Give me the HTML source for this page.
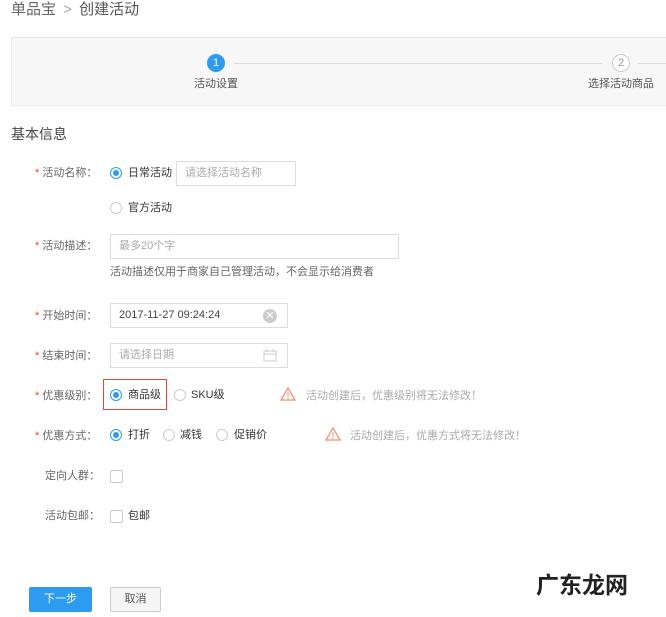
<!DOCTYPE html>
<html><head><meta charset="utf-8"><style>
body{margin:0;width:666px;height:617px;background:#fff;font-family:"Liberation Sans","Noto Sans CJK SC",sans-serif;color:#333;position:relative;overflow:hidden}
.a{position:absolute;white-space:nowrap}
.lbl{font-size:11px;color:#666;line-height:14px}
.star{color:#f04134;font-size:11px}
.r{position:absolute;width:12px;height:12px;border:1px solid #ccc;border-radius:50%;background:#fff;box-sizing:border-box}
.r.on{border-color:#2d9bf0}
.r.on:after{content:"";position:absolute;left:2px;top:2px;width:6px;height:6px;border-radius:50%;background:#2d9bf0}
.t{font-size:11px;color:#555;line-height:14px}
.in{position:absolute;border:1px solid #ddd;box-sizing:border-box;font-size:11px;color:#aaa;padding-left:8px;background:#fff}
.cb{position:absolute;width:13px;height:13px;border:1px solid #ccc;border-radius:2px;box-sizing:border-box}
.warn{color:#aaa;font-size:11px}
</style></head><body>
<div class="a" style="left:11px;top:0;font-size:15px;color:#666;line-height:20px">单品宝 <span style="color:#aaa;margin:0 3px">&gt;</span> <span style="color:#555">创建活动</span></div>
<div class="a" style="left:11px;top:37px;width:670px;height:69px;background:#f7f7f7;border:1px solid #e8e8e8;box-sizing:border-box"></div>
<div class="a" style="left:207px;top:54px;width:18px;height:18px;border-radius:50%;background:#2d9bf0;color:#fff;font-size:11px;text-align:center;line-height:18px">1</div>
<div class="a" style="left:234px;top:63px;width:368px;height:1px;background:#ddd"></div>
<div class="a" style="left:612px;top:54px;width:18px;height:18px;border-radius:50%;border:1px solid #ccc;box-sizing:border-box;background:#fff;color:#999;font-size:11px;text-align:center;line-height:16px">2</div>
<div class="a" style="left:638px;top:63px;width:30px;height:1px;background:#ddd"></div>
<div class="a t" style="left:194px;top:77px">活动设置</div>
<div class="a t" style="left:588px;top:77px">选择活动商品</div>
<div class="a" style="left:11px;top:124px;font-size:14px;color:#444">基本信息</div>

<div class="a lbl" style="left:35px;top:166px"><span class="star">*</span> 活动名称：</div>
<div class="r on" style="left:110px;top:167px"></div><div class="a t" style="left:128px;top:166px;color:#333">日常活动</div>
<div class="in" style="left:176px;top:161px;width:120px;height:25px;line-height:23px">请选择活动名称</div>
<div class="r" style="left:110px;top:202px"></div><div class="a t" style="left:128px;top:201px;color:#333">官方活动</div>

<div class="a lbl" style="left:35px;top:239px"><span class="star">*</span> 活动描述：</div>
<div class="in" style="left:110px;top:234px;width:289px;height:25px;line-height:23px">最多20个字</div>
<div class="a t" style="left:110px;top:265px;color:#666">活动描述仅用于商家自己管理活动，不会显示给消费者</div>

<div class="a lbl" style="left:35px;top:309px"><span class="star">*</span> 开始时间：</div>
<div class="in" style="left:110px;top:303px;width:178px;height:25px;line-height:23px;color:#444">2017-11-27 09:24:24</div>
<div class="a" style="left:263px;top:309px;width:14px;height:14px;border-radius:50%;background:#ccc;color:#fff;font-size:11px;text-align:center;line-height:14px">✕</div>

<div class="a lbl" style="left:35px;top:349px"><span class="star">*</span> 结束时间：</div>
<div class="in" style="left:110px;top:343px;width:178px;height:25px;line-height:23px">请选择日期</div>
<svg class="a" style="left:263px;top:349px" width="14" height="13"><rect x="1" y="2" width="12" height="10" fill="none" stroke="#ccc"/><line x1="1" y1="5" x2="13" y2="5" stroke="#ccc"/><line x1="4" y1="0" x2="4" y2="3" stroke="#ccc"/><line x1="10" y1="0" x2="10" y2="3" stroke="#ccc"/></svg>

<div class="a lbl" style="left:35px;top:389px"><span class="star">*</span> 优惠级别：</div>
<div class="a" style="left:103px;top:379px;width:64px;height:31px;border:1px solid #f04134;box-sizing:border-box"></div>
<div class="r on" style="left:110px;top:389px"></div><div class="a t" style="left:128px;top:388px;color:#333">商品级</div>
<div class="r" style="left:174px;top:389px"></div><div class="a t" style="left:191px;top:388px;color:#333">SKU级</div>
<svg class="a" style="left:280px;top:387px" width="16" height="14"><path d="M8 1L15 13H1Z" fill="none" stroke="#f5896b" stroke-width="1.2"/><line x1="8" y1="5" x2="8" y2="9.5" stroke="#f5896b"/><circle cx="8" cy="11" r=".7" fill="#f5896b"/></svg>
<div class="a warn" style="left:306px;top:387px">活动创建后，优惠级别将无法修改！</div>

<div class="a lbl" style="left:35px;top:429px"><span class="star">*</span> 优惠方式：</div>
<div class="r on" style="left:110px;top:429px"></div><div class="a t" style="left:128px;top:428px;color:#333">打折</div>
<div class="r" style="left:163px;top:429px"></div><div class="a t" style="left:180px;top:428px;color:#333">减钱</div>
<div class="r" style="left:216px;top:429px"></div><div class="a t" style="left:234px;top:428px;color:#333">促销价</div>
<svg class="a" style="left:325px;top:427px" width="16" height="14"><path d="M8 1L15 13H1Z" fill="none" stroke="#f5896b" stroke-width="1.2"/><line x1="8" y1="5" x2="8" y2="9.5" stroke="#f5896b"/><circle cx="8" cy="11" r=".7" fill="#f5896b"/></svg>
<div class="a warn" style="left:350px;top:427px">活动创建后，优惠方式将无法修改！</div>

<div class="a lbl" style="left:45px;top:469px">定向人群：</div>
<div class="cb" style="left:110px;top:470px"></div>
<div class="a lbl" style="left:45px;top:509px">活动包邮：</div>
<div class="cb" style="left:110px;top:510px"></div><div class="a t" style="left:128px;top:509px;color:#333">包邮</div>

<div class="a" style="left:29px;top:587px;width:63px;height:25px;background:#2d9bf0;border-radius:2px;color:#fff;font-size:11px;text-align:center;line-height:25px">下一步</div>
<div class="a" style="left:110px;top:587px;width:51px;height:25px;background:#f5f5f5;border:1px solid #ccc;box-sizing:border-box;border-radius:2px;color:#555;font-size:11px;text-align:center;line-height:23px">取消</div>
<div class="a" style="left:536px;top:570px;font-size:23px;line-height:30px;font-weight:bold;color:#222">广东龙网</div>
</body></html>
